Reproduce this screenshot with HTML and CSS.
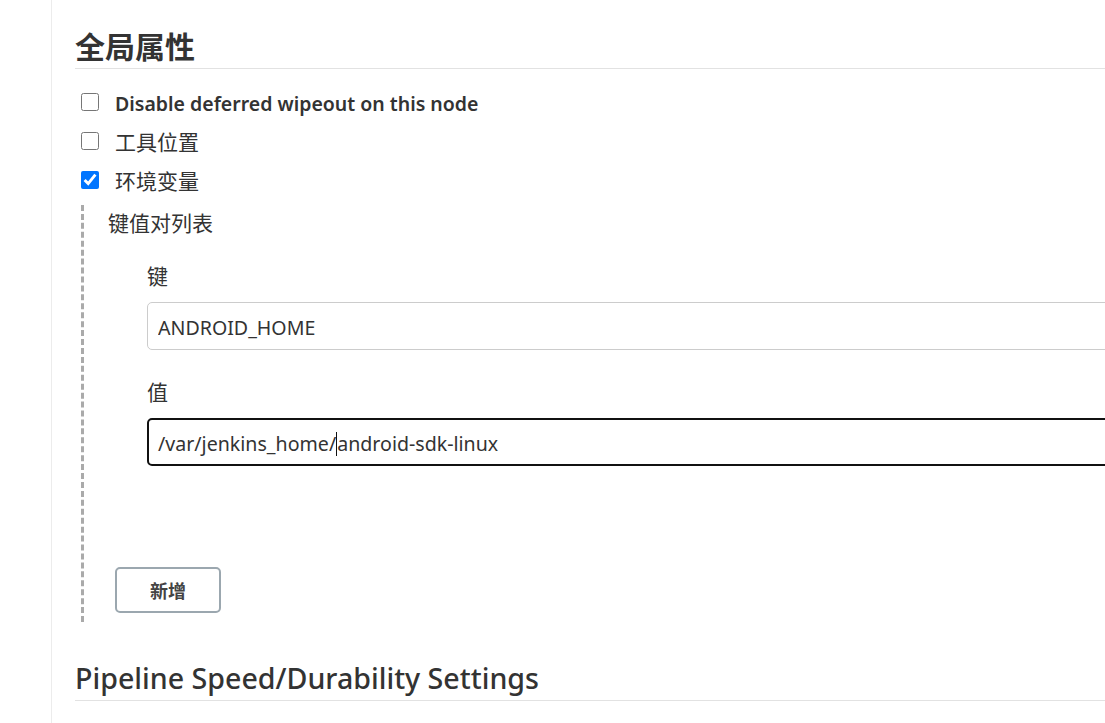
FILE: index.html
```html
<!DOCTYPE html>
<html lang="zh-CN">
<head>
<meta charset="utf-8">
<title>全局属性</title>
<link rel="stylesheet" href="styles.css">
</head>
<body>
<div class="page">
  <aside class="side"></aside>
  <main class="main">
    <h2 class="section-title">全局属性</h2>
    <div class="opts">
      <label class="opt"><input type="checkbox" class="cb"><span class="opt-text strong">Disable deferred wipeout on this node</span></label>
      <label class="opt"><input type="checkbox" class="cb"><span class="opt-text">工具位置</span></label>
      <label class="opt"><input type="checkbox" class="cb" checked><span class="opt-text">环境变量</span></label>
    </div>
    <div class="nested">
      <div class="nested-title">键值对列表</div>
      <div class="kv">
        <div class="field-label first">键</div>
        <input class="text-input" type="text" value="ANDROID_HOME">
        <div class="field-label">值</div>
        <div class="text-input focused"><span>/var/jenkins_home/</span><span class="caret"></span><span>android-sdk-linux</span></div>
      </div>
      <button class="add-btn" type="button">新增</button>
    </div>
    <h2 class="section-title second">Pipeline Speed/Durability Settings</h2>
  </main>
</div>
</body>
</html>
```

FILE: styles.css
```css
html, body {
  margin: 0;
  padding: 0;
  background: #fff;
  overflow: hidden;
}
body {
  font-family: "Noto Sans", "Noto Sans CJK SC", sans-serif;
  color: #333;
  font-size: 21px;
  width: 1105px;
  height: 723px;
}
.page {
  display: flex;
  height: 723px;
  overflow: hidden;
}
.side {
  width: 51px;
  flex: none;
  border-right: 1px solid #ececec;
}
.main {
  flex: 1;
  min-width: 0;
  overflow: hidden;
  padding-left: 23px;
}
.section-title {
  margin: 29px 0 0 0;
  font-size: 30px;
  line-height: 36px;
  font-weight: 700;
  padding-bottom: 3px;
  border-bottom: 1px solid #e2e2e2;
  color: #333;
}
.section-title.second {
  margin-top: 38px;
  padding-bottom: 4px;
  font-weight: 500;
  font-size: 28.6px;
}
.opts {
  padding-top: 13px;
  display: flex;
  flex-direction: column;
}
.opt {
  display: flex;
  align-items: center;
  height: 39px;
}
.cb {
  width: 18px;
  height: 18px;
  margin: 0 16px 0 6px;
  accent-color: #0075ff;
}
.opt-text {
  font-size: 21px;
}
.opt-text.strong {
  font-weight: 600;
  font-size: 19.5px;
  padding-top: 3px;
}
.nested {
  margin: 6px 0 0 6px;
  border-left: 3px dashed #aaa;
  padding: 3px 0 9px 24px;
}
.nested-title {
  line-height: 30px;
  font-size: 21px;
}
.kv {
  padding-left: 39px;
  padding-bottom: 101px;
}
.field-label {
  line-height: 30px;
  margin-top: 27px;
  margin-bottom: 11px;
  font-size: 21px;
}
.field-label.first {
  margin-top: 23px;
}
.text-input {
  display: flex;
  align-items: center;
  box-sizing: border-box;
  width: calc(100% + 40px);
  height: 48px;
  border: 1px solid #ccc;
  border-radius: 5px;
  padding: 3px 10px 0 10px;
  font-family: "Noto Sans", "Noto Sans CJK SC", sans-serif;
  font-size: 19.6px;
  color: #333;
  background: #fff;
  outline: none;
}
.text-input.focused {
  border: 2px solid #111;
  padding: 3px 9px 0 9px;
}
.caret {
  display: inline-block;
  width: 1px;
  height: 24px;
  background: #111;
}
.add-btn {
  margin-left: 7px;
  width: 106px;
  height: 46px;
  border: 2px solid #9ba7af;
  border-radius: 5px;
  background: #fff;
  font-family: "Noto Sans CJK SC", sans-serif;
  font-size: 18px;
  font-weight: 700;
  color: #444;
  display: block;
}
```
